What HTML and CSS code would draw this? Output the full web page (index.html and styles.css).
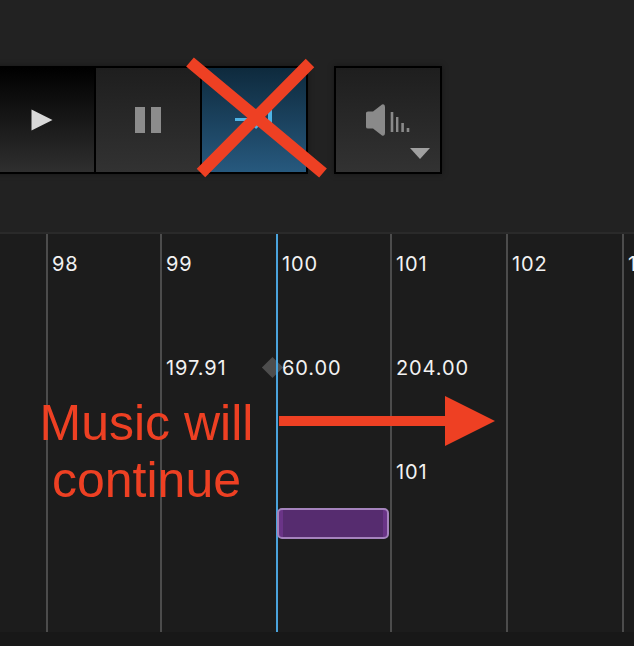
FILE: index.html
```html
<!DOCTYPE html>
<html lang="en">
<head>
<meta charset="utf-8">
<title>Transport</title>
<link rel="stylesheet" href="styles.css">
</head>
<body>
<div class="app">
  <header class="toolbar">
    <div class="transport">
      <button class="btn btn-play" type="button">
        <svg width="22" height="22" viewBox="0 0 22 22"><path d="M0.5 0.5 L21.5 11 L0.5 21.5 Z" fill="#d9d9d9"/></svg>
      </button>
      <button class="btn btn-pause" type="button">
        <svg width="26" height="26" viewBox="0 0 26 26"><rect x="0" y="0" width="10" height="26" fill="#8c8c8c"/><rect x="16" y="0" width="10" height="26" fill="#8c8c8c"/></svg>
      </button>
      <button class="btn btn-skip" type="button">
        <svg width="38" height="22" viewBox="0 0 38 22"><path d="M0 10.5 H30 M20 2 L29 10.5 L20 19" fill="none" stroke="#4fb4e6" stroke-width="3"/><rect x="33" y="0" width="4" height="20" fill="#4fb4e6"/></svg>
      </button>
    </div>
    <button class="btn btn-volume" type="button">
      <svg class="icon-speaker" width="44" height="32" viewBox="0 0 44 32"><path d="M0 9 Q0 7.5 2 7.5 H7 L16 0.5 Q19 -0.5 19 3 V29 Q19 32.500 16 31.500 L7 24.500 H2 Q0 24.500 0 23 Z" fill="#8a8a8a"/><rect x="24.700" y="8" width="2.600" height="20" fill="#8a8a8a"/><rect x="30" y="13" width="2.400" height="15" fill="#8a8a8a"/><rect x="35.300" y="19" width="2.600" height="9" fill="#8a8a8a"/><rect x="40.700" y="24" width="2.600" height="4" fill="#8a8a8a"/></svg>
      <svg class="icon-caret" width="20" height="11" viewBox="0 0 20 11"><path d="M0 0 H20 L10 11 Z" fill="#a0a0a0"/></svg>
    </button>
  </header>
  <main class="timeline">
    <section class="beat beat-short">
      <div class="cell">98</div>
    </section>
    <section class="beat beat-long">
      <div class="cell">99</div>
      <div class="cell">197.91</div>
    </section>
    <section class="beat beat-short beat-current">
      <div class="cell">100</div>
      <div class="cell"><span class="diamond"></span>60.00</div>
      <div class="cell"></div>
      <div class="clip"></div>
    </section>
    <section class="beat beat-long">
      <div class="cell">101</div>
      <div class="cell">204.00</div>
      <div class="cell">101</div>
    </section>
    <section class="beat beat-long">
      <div class="cell">102</div>
    </section>
    <section class="beat beat-long">
      <div class="cell">103</div>
    </section>
  </main>
  <footer class="footer"></footer>
  <svg class="marks" width="634" height="646" viewBox="0 0 634 646">
    <path d="M190 62 L323 173 M310 63 L201 173" fill="none" stroke="#ee4023" stroke-width="12"/>
    <path d="M279 416 H445 V396 L495 421 L445 446 V426 H279 Z" fill="#ee4023"/>
  </svg>
  <p class="note">Music will<br>continue</p>
</div>
</body>
</html>
```
FILE: styles.css
```css
* {
  box-sizing: border-box;
}

html,
body {
  margin: 0;
  padding: 0;
  background: #222222;
}

.app {
  position: relative;
  display: flex;
  flex-direction: column;
  width: 634px;
  height: 646px;
  overflow: hidden;
}

.toolbar {
  display: flex;
  align-items: flex-start;
  gap: 26px;
  flex: none;
  height: 234px;
  padding-top: 66px;
  background: #222222;
  border-bottom: 2px solid #2a2a2a;
}

.transport {
  display: flex;
  margin-left: -8px;
  border: 2px solid #000000;
  border-left: 0;
  background: #000000;
  box-shadow: 0 0 6px rgba(0, 0, 0, 0.35);
}

.btn {
  display: flex;
  align-items: center;
  justify-content: center;
  margin: 0;
  padding: 0;
  border: 0;
  height: 104px;
}

.btn-play {
  width: 104px;
  padding-right: 3px;
  background: linear-gradient(#000000, #2f2f2f);
  border-right: 2px solid #000000;
}

.btn-pause {
  width: 106px;
  background: linear-gradient(#1e1e1e, #323232);
  border-right: 2px solid #000000;
}

.btn-skip {
  width: 104px;
  background: linear-gradient(#0e2a3d, #27597e);
}

.btn-volume {
  position: relative;
  width: 108px;
  height: 108px;
  border: 2px solid #000000;
  background: linear-gradient(#1e1e1e, #323232);
  box-shadow: 0 0 6px rgba(0, 0, 0, 0.35);
}

.icon-speaker {
  margin-right: 1px;
  margin-bottom: 1px;
}

.icon-caret {
  position: absolute;
  left: 74px;
  top: 80px;
}

.timeline {
  position: relative;
  z-index: 0;
  display: flex;
  flex: 1;
  min-height: 0;
  padding-left: 46px;
  background: #1c1c1c;
  color: #f2f2f2;
  font-family: Inter, "Liberation Sans", sans-serif;
  font-size: 20px;
  letter-spacing: 0.9px;
}

.beat {
  flex: none;
  padding-left: 4px;
  border-left: 2px solid #4c4c4c;
}

.beat-short {
  width: 114px;
}

.beat-long {
  width: 116px;
}

.beat-current {
  border-left-color: #4aa3dc;
}

.cell {
  position: relative;
  height: 60px;
  line-height: 60px;
  white-space: nowrap;
}

.cell + .cell {
  margin-top: 44px;
}

.diamond {
  position: absolute;
  z-index: -1;
  left: -17px;
  top: 22px;
  width: 15px;
  height: 15px;
  background: #4d4d4d;
  transform: rotate(45deg);
}

.clip {
  position: relative;
  width: 112px;
  height: 31px;
  margin-top: 6px;
  margin-left: -5px;
  border: 2px solid #a583bd;
  border-radius: 5px;
  background: linear-gradient(to right, #6a3487 4px, #562c6f 4px, #562c6f calc(100% - 4px), #6a3487 calc(100% - 4px));
}

.footer {
  flex: none;
  height: 14px;
  background: #181818;
}

.marks {
  position: absolute;
  left: 0;
  top: 0;
  z-index: 2;
}

.note {
  position: absolute;
  z-index: 2;
  left: 0;
  top: 395px;
  width: 293px;
  margin: 0;
  color: #ee4023;
  font-family: "Liberation Sans", Arial, sans-serif;
  font-size: 50px;
  line-height: 57px;
  text-align: center;
}
```
